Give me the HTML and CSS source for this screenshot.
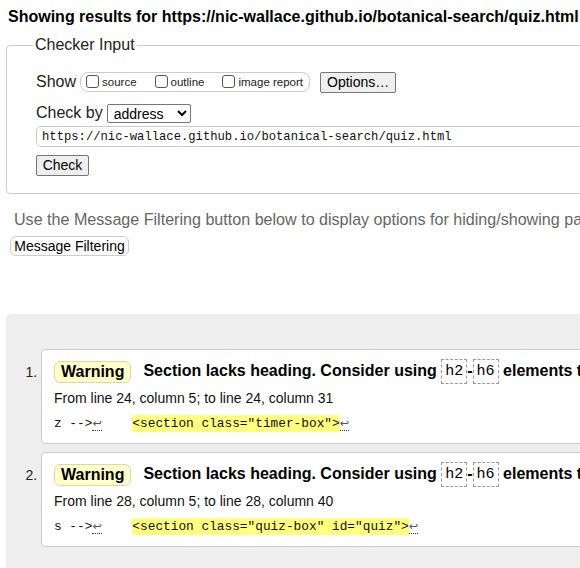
FILE: index.html
```html
<!DOCTYPE html>
<html lang="en">
<head>
<meta charset="utf-8">
<title>Nu Html Checker</title>
<link rel="stylesheet" href="styles.css">
</head>
<body>
<div class="page">
  <h2 class="title">Showing results for https://nic-wallace.github.io/botanical-search/quiz.html</h2>
  <form class="checker-form">
    <fieldset class="checker">
      <legend>Checker Input</legend>
      <div class="row row-show">
        <span class="lbl">Show</span>
        <span class="opts">
          <label class="opt"><input type="checkbox">source</label>
          <label class="opt"><input type="checkbox">outline</label>
          <label class="opt"><input type="checkbox">image report</label>
        </span>
        <button type="button" class="btn btn-options">Options…</button>
      </div>
      <div class="row row-by">
        <span class="lbl">Check by</span>
        <select class="sel"><option>address</option></select>
      </div>
      <div class="row row-url">
        <input class="url" type="text" value="https://nic-wallace.github.io/botanical-search/quiz.html">
      </div>
      <div class="row row-check">
        <button type="button" class="btn btn-check">Check</button>
      </div>
    </fieldset>
  </form>
  <p class="hint">Use the Message Filtering button below to display options for hiding/showing particular messages, and to see total counts of errors and warnings.</p>
  <button type="button" class="filter">Message Filtering</button>

  <div class="results">
    <ol class="msgs">
      <li class="msg">
        <div class="card">
          <p class="head"><strong class="badge">Warning</strong><span class="text">Section lacks heading. Consider using <code class="el">h2</code>-<code class="el">h6</code> elements to add identifying headings to all sections.</span></p>
          <p class="loc">From line 24, column 5; to line 24, column 31</p>
          <p class="extract"><code>z --&gt;<b class="lf">↩</b>    <mark class="hl">&lt;section class="timer-box"&gt;</mark><b class="lf">↩</b></code></p>
        </div>
      </li>
      <li class="msg">
        <div class="card">
          <p class="head"><strong class="badge">Warning</strong><span class="text">Section lacks heading. Consider using <code class="el">h2</code>-<code class="el">h6</code> elements to add identifying headings to all sections.</span></p>
          <p class="loc">From line 28, column 5; to line 28, column 40</p>
          <p class="extract"><code>s --&gt;<b class="lf">↩</b>    <mark class="hl">&lt;section class="quiz-box" id="quiz"&gt;</mark><b class="lf">↩</b></code></p>
        </div>
      </li>
    </ol>
  </div>
</div>
</body>
</html>
```

FILE: styles.css
```css
html { overflow: hidden; background: #fff; }
body {
  margin: 0;
  font-family: "Liberation Sans", Arial, sans-serif;
  color: #000;
}
.page {
  width: 820px;
  padding: 0 0 40px 0;
}
.title {
  margin: 0;
  padding: 7px 0 0 8px;
  font-size: 16px;
  font-weight: bold;
  line-height: 20px;
  white-space: nowrap;
}
.checker-form { margin: 9px 0 0 6px; }
.checker {
  margin: 0;
  border: 1px solid #ccc;
  border-radius: 4px;
  padding: 17px 0 17px 26px;
  min-inline-size: 0;
}
.checker legend {
  padding: 0 2px;
  font-size: 16px;
  line-height: 18px;
  color: #222;
}
.row {
  display: flex;
  align-items: center;
  margin-left: 3px;
}
.lbl { font-size: 16px; color: #222; }
.row-show { height: 22px; }
.opts {
  display: flex;
  align-items: center;
  margin-left: 4px;
  height: 18px;
  padding: 0 6px 0 5px;
  border: 1px solid #ccc;
  border-radius: 8px;
  font-size: 11.5px;
  color: #222;
  gap: 18px;
}
.opt { display: flex; align-items: center; }
.opt input {
  appearance: none;
  width: 13px; height: 13px;
  margin: 0 3px 0 0;
  border: 1px solid #555;
  border-radius: 3px;
  background: #fff;
  position: relative;
  top: -1px;
}
.btn {
  font-family: "Liberation Sans", Arial, sans-serif;
  font-size: 14px;
  color: #000;
  background: #efefef;
  border: 1px solid #767676;
  border-radius: 2px;
  padding: 0 6px;
  height: 21px;
  line-height: 19px;
}
.btn-options { margin-left: 10px; width: 76px; }
.row-by { margin-top: 11px; height: 18px; }
.sel {
  margin-left: 4px;
  width: 84px;
  height: 19px;
  font-family: "Liberation Sans", Arial, sans-serif;
  font-size: 14px;
  border: 1px solid #767676;
  border-radius: 2px;
  background: #fff;
  color: #000;
  padding: 0 0 0 2px;
}
.row-url { margin-top: 4px; }
.url {
  width: 700px;
  height: 21px;
  box-sizing: border-box;
  border: 1px solid #ccc;
  border-radius: 5px;
  padding: 0 5px;
  font-family: "Liberation Mono", "DejaVu Sans Mono", monospace;
  font-size: 12.2px;
  color: #111;
}
.row-check { margin-top: 8px; }
.btn-check { width: 53px; padding: 0; }
.hint {
  margin: 15px 0 0 14px;
  font-size: 16.1px;
  line-height: 20px;
  color: #666;
  white-space: nowrap;
}
.filter {
  display: block;
  margin: 7px 0 0 10px;
  width: 119px;
  height: 20px;
  padding: 0;
  font-family: "Liberation Sans", Arial, sans-serif;
  font-size: 14px;
  line-height: 18px;
  color: #000;
  background: #fff;
  border: 1px solid #ccc;
  border-radius: 6px;
}
.results {
  margin: 58px 0 0 6px;
  background: #eee;
  border-radius: 5px;
  padding: 35px 0 30px 0;
}
.msgs {
  margin: 0;
  padding: 0 0 0 35px;
  font-size: 14px;
}
.msg { margin-bottom: 8px; color: #222; }
.msg::marker { font-size: 14px; }
.card {
  background: #fff;
  border: 1px solid #ccc;
  border-radius: 4px;
  padding: 8px 0 10px 12px;
}
.card p { margin: 0; white-space: nowrap; }
.head {
  display: flex;
  align-items: center;
  height: 27px;
  font-size: 16px;
  font-weight: bold;
  color: #000;
}
.badge {
  display: inline-block;
  height: 22px;
  line-height: 20px;
  box-sizing: border-box;
  padding: 0 6px;
  background: #ffffcc;
  border: 1px solid #ddd7a8;
  border-radius: 6px;
  margin-right: 12px;
}
.el {
  display: inline-block;
  font-family: "Liberation Mono", "DejaVu Sans Mono", monospace;
  font-weight: normal;
  font-size: 15px;
  line-height: 23px;
  padding: 0 3px;
  border: 1px dashed #999;
  margin: 0;
  vertical-align: middle;
}
.loc {
  margin-top: 4px !important;
  font-size: 14px;
  line-height: 18px;
  color: #111;
}
.extract {
  margin-top: 8px !important;
  font-family: "Liberation Mono", "DejaVu Sans Mono", monospace;
  font-size: 12.8px;
  line-height: 18px;
  color: #111;
}
.extract code { font-family: inherit; white-space: pre; }
.hl { background: #ffff80; color: #111; padding: 1px 0; }
.lf {
  font-weight: normal;
  font-family: "DejaVu Sans", sans-serif;
  font-size: 11px;
  color: #555;
  border-bottom: 1px dotted #333;
}
```
